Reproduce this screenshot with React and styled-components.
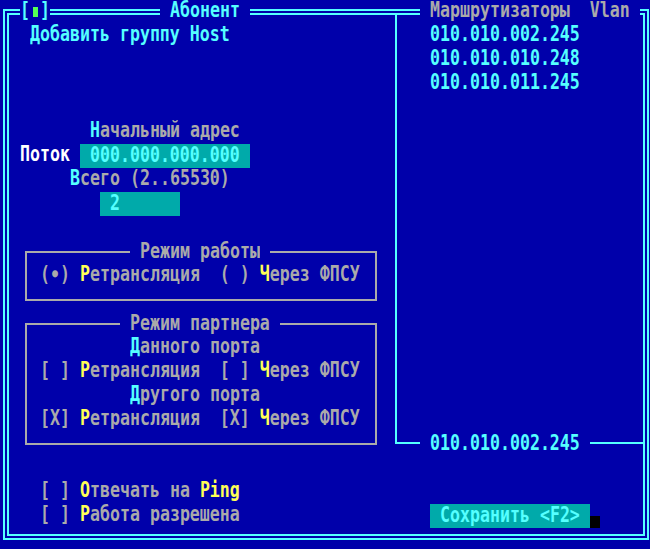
import React from 'react';
import styled, { createGlobalStyle } from 'styled-components';

// DOS text-mode palette
const C = {
  bg: '#0000aa',
  cyan: '#55ffff',
  gray: '#aaaaaa',
  yellow: '#ffff55',
  white: '#ffffff',
  teal: '#00aaaa',
  green: '#55ff55',
  black: '#000000',
};

// character cell: 10px wide, 24px tall
const CW = 10;
const leftPad = (col) => col * CW - 9;
const boxPad = (col) => col * CW - 27;

const Global = createGlobalStyle`
  html, body { margin: 0; padding: 0; background: ${C.bg}; }
  body { width: 650px; height: 549px; overflow: hidden; }
`;

const Screen = styled.div`
  width: 650px;
  height: 549px;
  box-sizing: border-box;
  padding: 9px 1px 9px 3px;
  background: ${C.bg};
  font-family: "DejaVu Sans Mono", "Liberation Mono", monospace;
  font-size: 16.6px;
  font-weight: bold;
  line-height: 24px;
  white-space: pre;
  color: ${C.gray};
`;

const Window = styled.div`
  position: relative;
  height: 100%;
  box-sizing: border-box;
  border: 6px double ${C.cyan};
  display: flex;
`;

const TitleBar = styled.div`
  position: absolute;
  top: -15px;
  left: -9px;
  width: 650px;
  height: 24px;
  pointer-events: none;
`;

const TitleChip = styled.div`
  position: absolute;
  top: 0;
  left: ${(p) => p.$col * CW}px;
  height: 24px;
  display: flex;
  align-items: flex-start;
  background: ${C.bg};
`;

const GreenMark = styled.span`
  display: inline-block;
  width: 5px;
  height: 10px;
  margin: 7px 2px 0 3px;
  background: ${C.green};
`;

// glyph run, stretched to the tall VGA letter shape
const T = styled.span`
  display: inline-block;
  height: 16px;
  line-height: 16px;
  margin: 3px 0 5px;
  transform: scaleY(1.24);
  transform-origin: 50% 8.5px;
  color: ${(p) => C[p.$c || 'gray']};
`;

const K = styled.span`
  color: ${(p) => C[p.$c]};
`;

const LeftPane = styled.div`
  width: 386px;
  flex: none;
  padding-top: 9px;
  display: flex;
  flex-direction: column;
`;

const Line = styled.div`
  display: flex;
  align-items: flex-start;
  height: 24px;
  padding-left: ${(p) => p.$pad}px;
`;

const Gap = styled.div`
  height: ${(p) => p.$h}px;
  flex: none;
`;

const Field = styled.span`
  display: inline-block;
  height: 24px;
  background: ${C.teal};
`;

const GroupBox = styled.fieldset`
  width: 352px;
  box-sizing: border-box;
  margin: 0 0 0 16px;
  padding: 0 0 11px 0;
  border: 2px solid ${C.gray};
  min-inline-size: 0;
`;

const Legend = styled.legend`
  padding: 0 10px;
  margin-left: ${(p) => p.$offset}px;
  height: 24px;
  line-height: 24px;
  color: ${C.gray};
`;

const RightPane = styled.div`
  flex: 1;
  display: flex;
  flex-direction: column;
`;

const ListBox = styled.div`
  position: relative;
  height: 429px;
  box-sizing: border-box;
  border-left: 2px solid ${C.cyan};
  border-bottom: 2px solid ${C.cyan};
  padding: 9px 0 0 33px;
`;

const FooterLabel = styled.div`
  position: absolute;
  left: 23px;
  bottom: -14px;
  height: 24px;
  background: ${C.bg};
`;

const Footer = styled.div`
  padding: 60px 0 0 35px;
  display: flex;
  align-items: flex-end;
`;

const Button = styled.div`
  height: 24px;
  padding: 0 10px;
  background: ${C.teal};
`;

const Shadow = styled.span`
  width: 10px;
  height: 12px;
  background: ${C.black};
`;

const routers = ['010.010.002.245', '010.010.010.248', '010.010.011.245'];

const Option = ({ mark, b }) => (
  <T>
    {mark} <K $c="yellow">Р</K>етрансляция  {b} <K $c="yellow">Ч</K>ерез ФПСУ
  </T>
);

export default function App() {
  return (
    <Screen>
      <Global />
      <Window>
        <TitleBar>
          <TitleChip $col={2}>
            <T $c="cyan">[</T>
            <GreenMark />
            <T $c="cyan">]</T>
          </TitleChip>
          <TitleChip $col={16}>
            <T $c="cyan"> Абонент </T>
          </TitleChip>
          <TitleChip $col={42}>
            <T> Маршрутизаторы  Vlan </T>
          </TitleChip>
        </TitleBar>

        <LeftPane>
          <Line $pad={leftPad(3)}>
            <T $c="cyan">Добавить группу Host</T>
          </Line>
          <Gap $h={72} />
          <Line $pad={leftPad(9)}>
            <T><K $c="cyan">Н</K>ачальный адрес</T>
          </Line>
          <Line $pad={leftPad(2)}>
            <T $c="white">Поток </T>
            <Field>
              <T $c="cyan"> 000.000.000.000 </T>
            </Field>
          </Line>
          <Line $pad={leftPad(7)}>
            <T><K $c="cyan">В</K>сего (2..65530)</T>
          </Line>
          <Line $pad={leftPad(10)}>
            <Field>
              <T $c="cyan"> 2      </T>
            </Field>
          </Line>
          <Gap $h={24} />

          <GroupBox>
            <Legend $offset={boxPad(13)}>
              <T>Режим работы</T>
            </Legend>
            <Line $pad={boxPad(4)}>
              <Option mark="(∙)" b="( )" />
            </Line>
          </GroupBox>
          <Gap $h={11} />
          <GroupBox>
            <Legend $offset={boxPad(12)}>
              <T>Режим партнера</T>
            </Legend>
            <Line $pad={boxPad(13)}>
              <T><K $c="cyan">Д</K>анного порта</T>
            </Line>
            <Line $pad={boxPad(4)}>
              <Option mark="[ ]" b="[ ]" />
            </Line>
            <Line $pad={boxPad(13)}>
              <T><K $c="cyan">Д</K>ругого порта</T>
            </Line>
            <Line $pad={boxPad(4)}>
              <Option mark="[X]" b="[X]" />
            </Line>
          </GroupBox>
          <Gap $h={35} />

          <Line $pad={leftPad(4)}>
            <T>[ ] <K $c="yellow">О</K>твечать на <K $c="yellow">Ping</K></T>
          </Line>
          <Line $pad={leftPad(4)}>
            <T>[ ] <K $c="yellow">Р</K>абота разрешена</T>
          </Line>
        </LeftPane>

        <RightPane>
          <ListBox>
            {routers.map((ip) => (
              <Line key={ip} $pad={0}>
                <T $c="cyan">{ip}</T>
              </Line>
            ))}
            <FooterLabel>
              <T $c="cyan"> 010.010.002.245 </T>
            </FooterLabel>
          </ListBox>
          <Footer>
            <Button>
              <T $c="cyan">Сохранить &lt;F2&gt;</T>
            </Button>
            <Shadow />
          </Footer>
        </RightPane>
      </Window>
    </Screen>
  );
}
